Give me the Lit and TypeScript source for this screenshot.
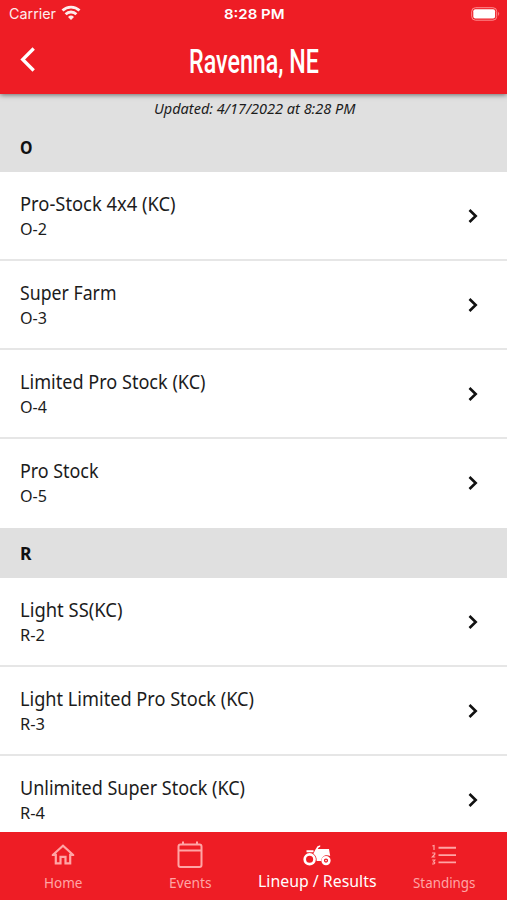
import { LitElement, html, css, svg } from "lit";
import { customElement, property } from "lit/decorators.js";

/** Single line of text set to an exact advance width, with its baseline at a given height. */
@customElement("fit-text")
class FitText extends LitElement {
  @property() text = "";
  @property({ type: Number }) width = 100;
  @property({ type: Number }) height = 24;
  @property({ type: Number }) baseline = 18;
  static styles = css`
    :host { display: block; }
    svg { display: block; overflow: visible; }
    text { fill: currentColor; white-space: pre; }
  `;
  render() {
    return html`<svg width=${this.width} height=${this.height}>${svg`<text x="0" y=${this.baseline} textLength=${this.width} lengthAdjust="spacingAndGlyphs">${this.text}</text>`}</svg>`;
  }
}

interface Row { title: string; code: string; width: number; codeWidth: number }
interface Section { name: string; rows: Row[] }

const sections: Section[] = [
  { name: "O", rows: [
    { title: "Pro-Stock 4x4 (KC)", code: "O-2", width: 155.5, codeWidth: 27 },
    { title: "Super Farm", code: "O-3", width: 96.5, codeWidth: 27 },
    { title: "Limited Pro Stock (KC)", code: "O-4", width: 185.5, codeWidth: 27 },
    { title: "Pro Stock", code: "O-5", width: 78.5, codeWidth: 27 },
  ] },
  { name: "R", rows: [
    { title: "Light SS(KC)", code: "R-2", width: 102.5, codeWidth: 25 },
    { title: "Light Limited Pro Stock (KC)", code: "R-3", width: 234, codeWidth: 25 },
    { title: "Unlimited Super Stock (KC)", code: "R-4", width: 225, codeWidth: 25 },
  ] },
];

const homeIcon = svg`<svg width="26" height="24" viewBox="0 0 26 24" fill="none" stroke="currentColor" stroke-width="2.200"><path d="M2.500 12.200L13 2.800l10.500 9.400M5.800 10.800V20.300h4.700v-6.500h5v6.500h4.700V10.800"/><path d="M1.800 12.200h4M20.200 12.200h4" stroke-width="1.500"/></svg>`;
const calendarIcon = svg`<svg width="28" height="30" viewBox="0 0 28 30" fill="none" stroke="currentColor" stroke-width="2"><rect x="2.500" y="4.500" width="23" height="22.500" rx="2"/><path d="M2.500 10.500h23M7 1.500v3M21 1.500v3"/></svg>`;
const tractorIcon = svg`<svg width="28" height="24" viewBox="0 0 28 24" fill="currentColor"><circle cx="6.600" cy="16.300" r="4.900" fill="none" stroke="currentColor" stroke-width="2.700"/><circle cx="23" cy="17.600" r="3.400" fill="none" stroke="currentColor" stroke-width="2.500"/><circle cx="23" cy="17.600" r=".8"/><path d="M3.500 7.200h7v2h-7zM12 7.300l2.500-4L17.200 2.200v1.600l-1.500.7L14.700 6H26l1.200 7c-4.500-1.800-8.600.2-9 5h-4.500c.2-3.500-1.200-6-3.300-7.300z"/></svg>`;
const listIcon = svg`<svg width="26" height="24" viewBox="0 0 26 24" fill="none" stroke="currentColor"><path d="M7.500 4.800h17.500M7.500 12.100h17.500M7.500 19.400h17.500" stroke-width="1.900"/><path d="M1.300 3l1.700-.5V7M1.100 10h2.700v1.200L1.300 14h2.900M1.200 17h2.600L2.500 18.900c2 0 1.700 2.600-1.300 2" stroke-width="1.200"/></svg>`;

const tabs = [
  { label: "Home", icon: homeIcon, width: 38.5, active: false },
  { label: "Events", icon: calendarIcon, width: 42.5, active: false },
  { label: "Lineup / Results", icon: tractorIcon, width: 118.5, active: true },
  { label: "Standings", icon: listIcon, width: 62.5, active: false },
];

@customElement("app-root")
class AppRoot extends LitElement {
  static styles = css`
    :host { display: flex; flex-direction: column; width: 507px; height: 900px; overflow: hidden; background: #fff; color: #1c1c1c; font-family: "Noto Sans", sans-serif; }
    .top { height: 94px; flex: none; background: #ee1d25; color: #fff; box-shadow: 0 1px 5px #0008; position: relative; z-index: 1; }
    .status { height: 27px; display: grid; grid-template-columns: 1fr auto 1fr; align-items: center; font-family: Inter, sans-serif; padding: 0 7px 0 9px; box-sizing: border-box; }
    .carrier { display: flex; gap: 5px; font-size: 14.500px; opacity: .92; }
    .clock { font-size: 13.700px; font-weight: 600; margin-left: -1px; }
    .battery { justify-self: end; }
    .bar { height: 67px; display: grid; grid-template-columns: 188.500px auto 1fr; }
    .back { margin: 18px 0 0 19px; }
    .place { font-family: Roboto, sans-serif; font-size: 34px; font-weight: 500; }
    .content { flex: 1; min-height: 0; overflow: hidden; }
    .updated { height: 28px; background: #e0e0e0; display: flex; justify-content: center; font-size: 14.300px; font-style: italic; padding-left: 2px; }
    .section { height: 49.500px; background: #e0e0e0; padding-left: 20px; font-size: 17px; font-weight: 700; color: #111; }
    .row { height: 89.130px; box-sizing: border-box; border-bottom: 2px solid #e6e6e6; display: flex; justify-content: space-between; align-items: center; padding: 1px 28px 0 20px; }
    .row:last-child { border-bottom-color: transparent; }
    .words { align-self: flex-start; margin-top: -1px; }
    .title { font-size: 19.200px; }
    .code { font-size: 16.300px; margin-left: .3px; }
    .nav { height: 68.500px; flex: none; background: #ee1d25; display: grid; grid-template-columns: repeat(4, 1fr); color: #ffa5a5; }
    .tab { display: flex; flex-direction: column; align-items: center; font-size: 14.300px; }
    .icon { height: 37px; display: flex; align-items: center; padding-top: 5px; box-sizing: content-box; }
    .tab fit-text { margin-left: .5px; }
    .active { color: #fff; font-size: 17px; }
  `;
  render() {
    return html`
      <header class="top">
        <div class="status">
          <div class="carrier"><fit-text text="Carrier" .width=${47} .height=${18} .baseline=${14}></fit-text>
            <svg width="20" height="16" viewBox="0 0 20 16" fill="none" stroke="#fff" stroke-width="2.800"><path d="M1.500 5.600a12.200 12.200 0 0 1 17 0M4.600 9.200a7.700 7.700 0 0 1 10.800 0"/><path d="M7 12a4.300 4.300 0 0 1 6 0l-3 3z" fill="#fff" stroke="none"/></svg>
          </div>
          <fit-text class="clock" text="8:28 PM" .width=${60.5} .height=${18} .baseline=${14}></fit-text>
          <svg class="battery" width="29" height="14" viewBox="0 0 29 14"><rect x=".7" y=".7" width="25" height="12.500" rx="3.800" fill="none" stroke="#ff8d90"/><rect x="2.300" y="2.300" width="21.800" height="9.300" rx="2" fill="#fff"/><path d="M27.200 4.800q2 2 0 4.200z" fill="#ff8d90"/></svg>
        </div>
        <div class="bar">
          <svg class="back" width="18" height="30" viewBox="0 0 18 30" fill="none" stroke="#fff" stroke-width="3.300"><path d="M14.700 3.500L3.700 14.500l11 11"/></svg>
          <fit-text class="place" text="Ravenna, NE" .width=${130} .height=${66} .baseline=${46}></fit-text>
        </div>
      </header>
      <main class="content">
        <div class="updated"><fit-text text="Updated: 4/17/2022 at 8:28 PM" .width=${201.5} .height=${28} .baseline=${19.6}></fit-text></div>
        ${sections.map((s) => html`
          <section>
            <div class="section"><fit-text text=${s.name} .width=${s.name === "O" ? 12.5 : 11.5} .height=${49} .baseline=${32}></fit-text></div>
            ${s.rows.map((r) => html`
              <div class="row">
                <div class="words">
                  <fit-text class="title" text=${r.title} .width=${r.width} .height=${46} .baseline=${38.9}></fit-text>
                  <fit-text class="code" text=${r.code} .width=${r.codeWidth} .height=${24} .baseline=${17.2}></fit-text>
                </div>
                <svg width="12" height="16" viewBox="0 0 12 16" fill="none" stroke="#111" stroke-width="2.600"><path d="M2.500 2L8.700 8l-6.200 6"/></svg>
              </div>`)}
          </section>`)}
      </main>
      <nav class="nav">
        ${tabs.map((t) => html`
          <div class="tab ${t.active ? "active" : ""}">
            <div class="icon">${t.icon}</div>
            <fit-text text=${t.label} .width=${t.width} .height=${20} .baseline=${t.active ? 12.9 : 13.8}></fit-text>
          </div>`)}
      </nav>`;
  }
}
